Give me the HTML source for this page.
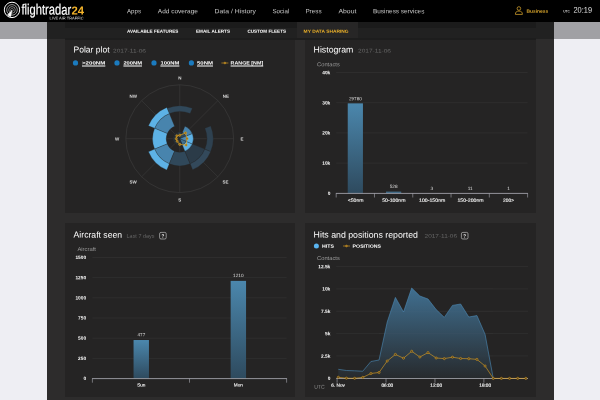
<!DOCTYPE html>
<html lang="en">
<head>
<meta charset="utf-8">
<title>Flightradar24 - My data sharing</title>
<style>
html,body{margin:0;padding:0}
body{width:600px;height:400px;overflow:hidden;background:#eeeef3;font-family:'Liberation Sans', sans-serif;text-rendering:geometricPrecision}
#page{position:relative;width:600px;height:400px;overflow:hidden}
.t{position:absolute;left:0;top:0;white-space:nowrap;line-height:normal;transform-origin:0 0}
.tl{position:absolute;left:0;top:0;width:600px;height:0;will-change:transform}
header{position:absolute;left:0;top:0;width:600px;height:21.7px;background:#000}
.band{position:absolute;left:0;top:21.7px;width:600px;height:17.5px;background:#a0a0a4}
.container{position:absolute;left:47px;top:21.7px;width:506.5px;height:378.3px;background:#2d2c2c}
.subnav{position:absolute;left:47px;top:21.7px;width:506.5px;height:17.5px;background:#212121}
.subshade{position:absolute;left:64.8px;top:21.7px;width:471.2px;height:6.6px;background:#1b1b1b}
.subshade2{position:absolute;left:64.8px;top:37.8px;width:471.2px;height:2.2px;background:#1d1d1d}
.tab{position:absolute;left:296.7px;top:21.7px;width:61px;height:17.6px;background:#272626}
.card{position:absolute;background:#252424}
svg{position:absolute;left:0;top:0;overflow:visible}
</style>
</head>
<body>
<div id="page">
<div class="band"></div>
<div class="container"></div>
<nav class="subnav"></nav>
<div class="subshade"></div>
<div class="tab"></div>
<div class="subshade2"></div>
<section class="card" style="left:65px;top:39.9px;width:230.3px;height:173.6px"></section>
<section class="card" style="left:305px;top:39.9px;width:231px;height:173.6px"></section>
<section class="card" style="left:65px;top:222.8px;width:230.3px;height:174.6px"></section>
<section class="card" style="left:305px;top:222.8px;width:231px;height:174.6px"></section>
<header></header>
<svg width="600" height="400" viewBox="0 0 600 400">
<defs>
<linearGradient id="bar" x1="0" y1="0" x2="0" y2="1"><stop offset="0" stop-color="#4b87ad"/><stop offset="1" stop-color="#2e4a5e"/></linearGradient>
<linearGradient id="area" gradientUnits="userSpaceOnUse" x1="0" y1="288" x2="0" y2="378.4"><stop offset="0" stop-color="#406f90"/><stop offset="1" stop-color="#272a2d"/></linearGradient>
</defs>
<g id="logo-icon" fill="none" stroke="#fff">
<circle cx="12" cy="9.9" r="7.7" stroke-width="1.0"/>
<circle cx="12" cy="9.9" r="5.3" stroke-width="0.7" stroke="#d8d8d8"/>
<circle cx="12" cy="9.9" r="3.3" stroke-width="0.65" stroke="#c4c4c4"/>
<circle cx="12" cy="9.9" r="1.5" stroke-width="0.55" stroke="#a8a8a8"/>
<path d="M12.1,9.9 L7.5,15 A6.9,6.9 0 0 0 10.7,16.7 Z" fill="#fff" stroke="#fff" stroke-width="0.4" stroke-linejoin="round"/>
</g>
<g id="user-icon" fill="none" stroke="#e0ab2f" stroke-width="0.72">
<circle cx="518.9" cy="8.5" r="1.8"/>
<path d="M515.4,14.4 C515.4,12 516.6,11.1 518.9,11.1 C521.2,11.1 522.4,12 522.4,14.4 Z" stroke-linejoin="round"/>
</g>
<g id="polar">
<circle cx="179.75" cy="138.7" r="53.9" fill="none" stroke="#484848" stroke-width="0.45"/>
<line x1="179.75" y1="138.7" x2="179.75" y2="84.80" stroke="#474747" stroke-width="0.4"/>
<line x1="179.75" y1="138.7" x2="217.86" y2="100.59" stroke="#474747" stroke-width="0.4"/>
<line x1="179.75" y1="138.7" x2="233.65" y2="138.70" stroke="#474747" stroke-width="0.4"/>
<line x1="179.75" y1="138.7" x2="217.86" y2="176.81" stroke="#474747" stroke-width="0.4"/>
<line x1="179.75" y1="138.7" x2="179.75" y2="192.60" stroke="#474747" stroke-width="0.4"/>
<line x1="179.75" y1="138.7" x2="141.64" y2="176.81" stroke="#474747" stroke-width="0.4"/>
<line x1="179.75" y1="138.7" x2="125.85" y2="138.70" stroke="#474747" stroke-width="0.4"/>
<line x1="179.75" y1="138.7" x2="141.64" y2="100.59" stroke="#474747" stroke-width="0.4"/>
<path d="M167.16,108.30A32.9,32.9 0 0 1 192.34,108.30L190.16,113.57A27.2,27.2 0 0 0 169.34,113.57Z" fill="#30485a" stroke="#252424" stroke-width="0.3"/>
<path d="M154.62,128.29A27.2,27.2 0 0 1 169.34,113.57L174.56,126.18A13.55,13.55 0 0 0 167.23,133.51Z" fill="#4884ad" stroke="#252424" stroke-width="0.3"/>
<path d="M148.43,125.73A33.9,33.9 0 0 1 166.78,107.38L169.34,113.57A27.2,27.2 0 0 0 154.62,128.29Z" fill="#5db2e6" stroke="#252424" stroke-width="0.3"/>
<path d="M154.62,149.11A27.2,27.2 0 0 1 154.62,128.29L167.23,133.51A13.55,13.55 0 0 0 167.23,143.89Z" fill="#5db2e6" stroke="#252424" stroke-width="0.3"/>
<path d="M169.34,163.83A27.2,27.2 0 0 1 154.62,149.11L167.23,143.89A13.55,13.55 0 0 0 174.56,151.22Z" fill="#4884ad" stroke="#252424" stroke-width="0.3"/>
<path d="M166.78,170.02A33.9,33.9 0 0 1 148.43,151.67L154.62,149.11A27.2,27.2 0 0 0 169.34,163.83Z" fill="#5db2e6" stroke="#252424" stroke-width="0.3"/>
<path d="M190.16,163.83A27.2,27.2 0 0 1 169.34,163.83L174.56,151.22A13.55,13.55 0 0 0 184.94,151.22Z" fill="#30485a" stroke="#252424" stroke-width="0.3"/>
<path d="M204.88,149.11A27.2,27.2 0 0 1 190.16,163.83L184.94,151.22A13.55,13.55 0 0 0 192.27,143.89Z" fill="#2b3b48" stroke="#252424" stroke-width="0.3"/>
<path d="M210.79,151.56A33.6,33.6 0 0 1 192.61,169.74L190.16,163.83A27.2,27.2 0 0 0 204.88,149.11Z" fill="#33495b" stroke="#252424" stroke-width="0.3"/>
<path d="M192.27,143.89A13.55,13.55 0 0 1 184.94,151.22L182.35,144.98A6.8,6.8 0 0 0 186.03,141.30Z" fill="#5db2e6" stroke="#252424" stroke-width="0.3"/>
<path d="M210.70,125.88A33.5,33.5 0 0 1 210.70,151.52L204.88,149.11A27.2,27.2 0 0 0 204.88,128.29Z" fill="#2e4150" stroke="#252424" stroke-width="0.3"/>
<path d="M192.27,133.51A13.55,13.55 0 0 1 192.27,143.89L186.03,141.30A6.8,6.8 0 0 0 186.03,136.10Z" fill="#5db2e6" stroke="#252424" stroke-width="0.3"/>
<path d="M184.94,126.18A13.55,13.55 0 0 1 192.27,133.51L186.03,136.10A6.8,6.8 0 0 0 182.35,132.42Z" fill="#4884ad" stroke="#252424" stroke-width="0.3"/>
<path d="M179.75,138.70L177.15,132.42A6.8,6.8 0 0 1 182.35,132.42Z" fill="#2a3a46" stroke="#252424" stroke-width="0.3"/>
<path d="M179.75,138.70L182.35,132.42A6.8,6.8 0 0 1 186.03,136.10Z" fill="#2f4a5e" stroke="#252424" stroke-width="0.3"/>
<path d="M179.75,138.70L186.03,136.10A6.8,6.8 0 0 1 186.03,141.30Z" fill="#4a88b5" stroke="#252424" stroke-width="0.3"/>
<path d="M179.75,138.70L186.03,141.30A6.8,6.8 0 0 1 182.35,144.98Z" fill="#3f7090" stroke="#252424" stroke-width="0.3"/>
<path d="M179.75,138.70L182.35,144.98A6.8,6.8 0 0 1 177.15,144.98Z" fill="#29353f" stroke="#252424" stroke-width="0.3"/>
<path d="M179.75,138.70L177.15,144.98A6.8,6.8 0 0 1 173.47,141.30Z" fill="#27313a" stroke="#252424" stroke-width="0.3"/>
<path d="M179.75,138.70L173.47,141.30A6.8,6.8 0 0 1 173.47,136.10Z" fill="#27313a" stroke="#252424" stroke-width="0.3"/>
<path d="M179.75,138.70L173.47,136.10A6.8,6.8 0 0 1 177.15,132.42Z" fill="#27313a" stroke="#252424" stroke-width="0.3"/>
<path d="M179.75,135.30L185.48,132.97L187.05,138.70L186.11,145.06L179.75,144.40L177.20,141.25L176.25,138.70L176.85,135.80Z" fill="none" stroke="#e3a321" stroke-width="0.7"/><circle cx="179.75" cy="135.30" r="1.1" fill="#8a6a20" stroke="#e3a321" stroke-width="0.55"/><circle cx="185.48" cy="132.97" r="1.1" fill="#8a6a20" stroke="#e3a321" stroke-width="0.55"/><circle cx="187.05" cy="138.70" r="1.1" fill="#8a6a20" stroke="#e3a321" stroke-width="0.55"/><circle cx="186.11" cy="145.06" r="1.1" fill="#8a6a20" stroke="#e3a321" stroke-width="0.55"/><circle cx="179.75" cy="144.40" r="1.1" fill="#8a6a20" stroke="#e3a321" stroke-width="0.55"/><circle cx="177.20" cy="141.25" r="1.1" fill="#8a6a20" stroke="#e3a321" stroke-width="0.55"/><circle cx="176.25" cy="138.70" r="1.1" fill="#8a6a20" stroke="#e3a321" stroke-width="0.55"/><circle cx="176.85" cy="135.80" r="1.1" fill="#8a6a20" stroke="#e3a321" stroke-width="0.55"/>
<circle cx="75.5" cy="62.9" r="2.6" fill="#1b7bbf"/><circle cx="117" cy="62.9" r="2.6" fill="#1b7bbf"/><circle cx="154" cy="62.9" r="2.6" fill="#1b7bbf"/><circle cx="191.4" cy="62.9" r="2.6" fill="#1b7bbf"/><line x1="221.4" y1="63" x2="228.4" y2="63" stroke="#e3a321" stroke-width="0.6"/><circle cx="224.9" cy="63" r="0.9" fill="#8a6a20" stroke="#e3a321" stroke-width="0.5"/>
</g>
<g id="histogram">
<line x1="336.2" y1="72.50" x2="527.6" y2="72.50" stroke="#3c3c3c" stroke-width="0.4"/>
<line x1="336.2" y1="102.70" x2="527.6" y2="102.70" stroke="#3c3c3c" stroke-width="0.4"/>
<line x1="336.2" y1="132.90" x2="527.6" y2="132.90" stroke="#3c3c3c" stroke-width="0.4"/>
<line x1="336.2" y1="163.10" x2="527.6" y2="163.10" stroke="#3c3c3c" stroke-width="0.4"/>
<rect x="347.74" y="103.36" width="15.2" height="89.94" fill="url(#bar)"/>
<rect x="386.02" y="191.71" width="15.2" height="1.59" fill="url(#bar)"/>
<line x1="335.9" y1="193.40" x2="527.9" y2="193.40" stroke="#a9a9b1" stroke-width="0.85"/>
<line x1="336.20" y1="193.3" x2="336.20" y2="197.5" stroke="#a9a9b1" stroke-width="0.6"/>
<line x1="374.48" y1="193.3" x2="374.48" y2="197.5" stroke="#a9a9b1" stroke-width="0.6"/>
<line x1="412.76" y1="193.3" x2="412.76" y2="197.5" stroke="#a9a9b1" stroke-width="0.6"/>
<line x1="451.04" y1="193.3" x2="451.04" y2="197.5" stroke="#a9a9b1" stroke-width="0.6"/>
<line x1="489.32" y1="193.3" x2="489.32" y2="197.5" stroke="#a9a9b1" stroke-width="0.6"/>
<line x1="527.60" y1="193.3" x2="527.60" y2="197.5" stroke="#a9a9b1" stroke-width="0.6"/>
</g>
<g id="aircraft">
<line x1="92.4" y1="257.50" x2="286.6" y2="257.50" stroke="#3c3c3c" stroke-width="0.4"/>
<line x1="92.4" y1="277.67" x2="286.6" y2="277.67" stroke="#3c3c3c" stroke-width="0.4"/>
<line x1="92.4" y1="297.84" x2="286.6" y2="297.84" stroke="#3c3c3c" stroke-width="0.4"/>
<line x1="92.4" y1="318.01" x2="286.6" y2="318.01" stroke="#3c3c3c" stroke-width="0.4"/>
<line x1="92.4" y1="338.18" x2="286.6" y2="338.18" stroke="#3c3c3c" stroke-width="0.4"/>
<line x1="92.4" y1="358.35" x2="286.6" y2="358.35" stroke="#3c3c3c" stroke-width="0.4"/>
<rect x="133.55" y="340.02" width="15.4" height="38.48" fill="url(#bar)"/>
<rect x="230.65" y="280.88" width="15.4" height="97.62" fill="url(#bar)"/>
<line x1="92.10000000000001" y1="378.60" x2="286.90000000000003" y2="378.60" stroke="#a9a9b1" stroke-width="0.85"/>
<line x1="92.40" y1="378.5" x2="92.40" y2="382.7" stroke="#a9a9b1" stroke-width="0.6"/>
<line x1="189.50" y1="378.5" x2="189.50" y2="382.7" stroke="#a9a9b1" stroke-width="0.6"/>
<line x1="286.60" y1="378.5" x2="286.60" y2="382.7" stroke="#a9a9b1" stroke-width="0.6"/>
<rect x="159.6" y="232.4" width="6.6" height="6.6" rx="1.4" fill="none" stroke="#e8e8e8" stroke-width="0.55"/>
</g>
<g id="hits">
<line x1="336.2" y1="266.55" x2="528" y2="266.55" stroke="#3c3c3c" stroke-width="0.4"/>
<line x1="336.2" y1="288.90" x2="528" y2="288.90" stroke="#3c3c3c" stroke-width="0.4"/>
<line x1="336.2" y1="311.25" x2="528" y2="311.25" stroke="#3c3c3c" stroke-width="0.4"/>
<line x1="336.2" y1="333.60" x2="528" y2="333.60" stroke="#3c3c3c" stroke-width="0.4"/>
<line x1="336.2" y1="355.95" x2="528" y2="355.95" stroke="#3c3c3c" stroke-width="0.4"/>
<path d="M338.30,378.4L338.30,369.30L346.45,370.50L354.61,370.80L362.76,371.25L370.92,361.50L379.07,360.00L387.23,322.00L395.38,297.40L403.54,312.00L411.69,288.00L419.85,296.00L428.00,299.00L436.16,309.60L444.31,317.40L452.47,305.40L460.62,304.00L468.78,317.00L476.94,315.60L485.09,334.40L493.25,378.40Z" fill="url(#area)"/>
<line x1="379.075" y1="288.90" x2="493.245" y2="288.90" stroke="rgba(255,255,255,0.05)" stroke-width="0.4"/>
<line x1="379.075" y1="311.25" x2="493.245" y2="311.25" stroke="rgba(255,255,255,0.05)" stroke-width="0.4"/>
<line x1="379.075" y1="333.60" x2="493.245" y2="333.60" stroke="rgba(255,255,255,0.05)" stroke-width="0.4"/>
<line x1="379.075" y1="355.95" x2="493.245" y2="355.95" stroke="rgba(255,255,255,0.05)" stroke-width="0.4"/>
<path d="M338.30,369.30L346.45,370.50L354.61,370.80L362.76,371.25L370.92,361.50L379.07,360.00L387.23,322.00L395.38,297.40L403.54,312.00L411.69,288.00L419.85,296.00L428.00,299.00L436.16,309.60L444.31,317.40L452.47,305.40L460.62,304.00L468.78,317.00L476.94,315.60L485.09,334.40L493.25,378.40" fill="none" stroke="#4b8bb8" stroke-width="0.6" stroke-linejoin="round"/>
<line x1="336.2" y1="378.50" x2="528" y2="378.50" stroke="#a9a9b1" stroke-width="0.8"/>
<line x1="337.10" y1="378.4" x2="337.10" y2="382.7" stroke="#a9a9b1" stroke-width="0.6"/>
<line x1="386.03" y1="378.4" x2="386.03" y2="382.7" stroke="#a9a9b1" stroke-width="0.6"/>
<line x1="434.96" y1="378.4" x2="434.96" y2="382.7" stroke="#a9a9b1" stroke-width="0.6"/>
<line x1="483.89" y1="378.4" x2="483.89" y2="382.7" stroke="#a9a9b1" stroke-width="0.6"/>
<path d="M338.30,377.30L346.45,378.20L354.61,378.30L362.76,377.40L370.92,373.50L379.07,372.45L387.23,361.00L395.38,354.45L403.54,358.20L411.69,351.30L419.85,357.00L428.00,352.60L436.16,358.00L444.31,358.60L452.47,357.20L460.62,358.50L468.78,358.70L476.94,359.40L485.09,366.00L493.25,378.40L501.40,378.40L509.56,378.40L517.71,378.40L525.87,378.40" fill="none" stroke="#e3a321" stroke-width="0.6" stroke-linejoin="round"/>
<circle cx="338.30" cy="377.30" r="1.1" fill="#54431f" stroke="#e3a321" stroke-width="0.5"/><circle cx="346.45" cy="378.20" r="1.1" fill="#54431f" stroke="#e3a321" stroke-width="0.5"/><circle cx="354.61" cy="378.30" r="1.1" fill="#54431f" stroke="#e3a321" stroke-width="0.5"/><circle cx="362.76" cy="377.40" r="1.1" fill="#54431f" stroke="#e3a321" stroke-width="0.5"/><circle cx="370.92" cy="373.50" r="1.1" fill="#54431f" stroke="#e3a321" stroke-width="0.5"/><circle cx="379.07" cy="372.45" r="1.1" fill="#54431f" stroke="#e3a321" stroke-width="0.5"/><circle cx="387.23" cy="361.00" r="1.1" fill="#54431f" stroke="#e3a321" stroke-width="0.5"/><circle cx="395.38" cy="354.45" r="1.1" fill="#54431f" stroke="#e3a321" stroke-width="0.5"/><circle cx="403.54" cy="358.20" r="1.1" fill="#54431f" stroke="#e3a321" stroke-width="0.5"/><circle cx="411.69" cy="351.30" r="1.1" fill="#54431f" stroke="#e3a321" stroke-width="0.5"/><circle cx="419.85" cy="357.00" r="1.1" fill="#54431f" stroke="#e3a321" stroke-width="0.5"/><circle cx="428.00" cy="352.60" r="1.1" fill="#54431f" stroke="#e3a321" stroke-width="0.5"/><circle cx="436.16" cy="358.00" r="1.1" fill="#54431f" stroke="#e3a321" stroke-width="0.5"/><circle cx="444.31" cy="358.60" r="1.1" fill="#54431f" stroke="#e3a321" stroke-width="0.5"/><circle cx="452.47" cy="357.20" r="1.1" fill="#54431f" stroke="#e3a321" stroke-width="0.5"/><circle cx="460.62" cy="358.50" r="1.1" fill="#54431f" stroke="#e3a321" stroke-width="0.5"/><circle cx="468.78" cy="358.70" r="1.1" fill="#54431f" stroke="#e3a321" stroke-width="0.5"/><circle cx="476.94" cy="359.40" r="1.1" fill="#54431f" stroke="#e3a321" stroke-width="0.5"/><circle cx="485.09" cy="366.00" r="1.1" fill="#54431f" stroke="#e3a321" stroke-width="0.5"/><circle cx="493.25" cy="378.40" r="1.1" fill="#54431f" stroke="#e3a321" stroke-width="0.5"/><circle cx="501.40" cy="378.40" r="1.1" fill="#54431f" stroke="#e3a321" stroke-width="0.5"/><circle cx="509.56" cy="378.40" r="1.1" fill="#54431f" stroke="#e3a321" stroke-width="0.5"/><circle cx="517.71" cy="378.40" r="1.1" fill="#54431f" stroke="#e3a321" stroke-width="0.5"/><circle cx="525.87" cy="378.40" r="1.1" fill="#54431f" stroke="#e3a321" stroke-width="0.5"/>
<circle cx="316.4" cy="246" r="2.5" fill="#5ab4f0"/><line x1="343" y1="246" x2="350" y2="246" stroke="#e3a321" stroke-width="0.6"/><circle cx="346.5" cy="246" r="0.9" fill="#8a6a20" stroke="#e3a321" stroke-width="0.5"/>
<rect x="461.4" y="232.4" width="6.6" height="6.6" rx="1.4" fill="none" stroke="#e8e8e8" stroke-width="0.55"/>
</g>
</svg>
<div class="tl logo"><span class="t" style="font-size:14.7px;color:#fff;transform:matrix(0.762,0.0017,0,1,21.40,2.55);-webkit-text-stroke:0.18px #fff;">flightradar</span>
<span class="t" style="font-size:11.6px;color:#f3b32a;font-weight:700;transform:matrix(0.976,0.0017,0,1,71.40,4.55);">24</span>
<span class="t" style="font-size:3.9px;color:#ddd;transform:matrix(1.023,0.0017,0,1,49.60,15.50);">LIVE AIR TRAFFIC</span></div>
<div class="tl mainnav"><span class="t" style="font-size:6.25px;color:#c8c8c8;transform:matrix(0.982,0.0017,0,1,127.00,8.30);">Apps</span>
<span class="t" style="font-size:6.25px;color:#c8c8c8;transform:matrix(1.042,0.0017,0,1,157.80,8.30);">Add coverage</span>
<span class="t" style="font-size:6.25px;color:#c8c8c8;transform:matrix(1.094,0.0017,0,1,214.60,8.30);">Data / History</span>
<span class="t" style="font-size:6.25px;color:#c8c8c8;transform:matrix(0.986,0.0017,0,1,272.40,8.30);">Social</span>
<span class="t" style="font-size:6.25px;color:#c8c8c8;transform:matrix(1.013,0.0017,0,1,305.40,8.30);">Press</span>
<span class="t" style="font-size:6.25px;color:#c8c8c8;transform:matrix(1.101,0.0017,0,1,338.40,8.30);">About</span>
<span class="t" style="font-size:6.25px;color:#c8c8c8;transform:matrix(1.027,0.0017,0,1,373.00,8.30);">Business services</span></div>
<div class="tl userbox"><span class="t" style="font-size:4.7px;color:#dca82d;font-weight:700;transform:matrix(1.046,0.0017,0,1,526.40,8.70);">Business</span>
<span class="t" style="font-size:3.5px;color:#c4c4c4;font-weight:700;transform:matrix(0.944,0.0017,0,1,563.20,9.50);">UTC</span>
<span class="t" style="font-size:8.3px;color:#e2e2e2;transform:matrix(0.891,0.0017,0,1,573.50,4.80);">20:19</span></div>
<div class="tl subnav-items"><span class="t" style="font-size:4.5px;color:#fff;font-weight:700;transform:matrix(1.023,0.0017,0,1,127.00,28.65);">AVAILABLE FEATURES</span>
<span class="t" style="font-size:4.5px;color:#fff;font-weight:700;transform:matrix(1.030,0.0017,0,1,196.00,28.65);">EMAIL ALERTS</span>
<span class="t" style="font-size:4.5px;color:#fff;font-weight:700;transform:matrix(1.018,0.0017,0,1,247.40,28.65);">CUSTOM FLEETS</span>
<span class="t" style="font-size:4.5px;color:#f0b429;font-weight:700;transform:matrix(1.082,0.0017,0,1,303.60,28.65);">MY DATA SHARING</span></div>
<div class="tl c1"><span class="t" style="font-size:8.7px;color:#fff;transform:matrix(0.981,0.0017,0,1,73.55,44.45);">Polar plot</span>
<span class="t" style="font-size:5.3px;color:#666;transform:matrix(1.236,0.0017,0,1,113.00,48.60);">2017-11-06</span>
<span class="t" style="font-size:4.7px;color:#fff;font-weight:700;transform:matrix(1.305,0.0017,0,1,82.00,60.55);text-decoration:underline;text-decoration-thickness:0.4px;text-underline-offset:0.55px;text-decoration-skip-ink:none;">&gt;200NM</span>
<span class="t" style="font-size:4.7px;color:#fff;font-weight:700;transform:matrix(1.230,0.0017,0,1,123.40,60.55);text-decoration:underline;text-decoration-thickness:0.4px;text-underline-offset:0.55px;text-decoration-skip-ink:none;">200NM</span>
<span class="t" style="font-size:4.7px;color:#fff;font-weight:700;transform:matrix(1.256,0.0017,0,1,160.40,60.55);text-decoration:underline;text-decoration-thickness:0.4px;text-underline-offset:0.55px;text-decoration-skip-ink:none;">100NM</span>
<span class="t" style="font-size:4.7px;color:#fff;font-weight:700;transform:matrix(1.278,0.0017,0,1,197.00,60.55);text-decoration:underline;text-decoration-thickness:0.4px;text-underline-offset:0.55px;text-decoration-skip-ink:none;">50NM</span>
<span class="t" style="font-size:4.7px;color:#fff;font-weight:700;transform:matrix(1.138,0.0017,0,1,230.60,60.55);text-decoration:underline;text-decoration-thickness:0.4px;text-underline-offset:0.55px;text-decoration-skip-ink:none;">RANGE [NM]</span>
<span class="t" style="font-size:4.5px;color:#dadada;font-weight:700;transform:matrix(1.000,0.0017,0,1,178.18,75.60);">N</span>
<span class="t" style="font-size:4.5px;color:#dadada;font-weight:700;transform:matrix(1.000,0.0017,0,1,222.87,93.80);">NE</span>
<span class="t" style="font-size:4.5px;color:#dadada;font-weight:700;transform:matrix(1.000,0.0017,0,1,240.49,136.60);">E</span>
<span class="t" style="font-size:4.5px;color:#dadada;font-weight:700;transform:matrix(1.000,0.0017,0,1,222.49,179.60);">SE</span>
<span class="t" style="font-size:4.5px;color:#dadada;font-weight:700;transform:matrix(1.000,0.0017,0,1,178.19,197.40);">S</span>
<span class="t" style="font-size:4.5px;color:#dadada;font-weight:700;transform:matrix(1.000,0.0017,0,1,129.38,179.60);">SW</span>
<span class="t" style="font-size:4.5px;color:#dadada;font-weight:700;transform:matrix(1.000,0.0017,0,1,115.08,136.60);">W</span>
<span class="t" style="font-size:4.5px;color:#dadada;font-weight:700;transform:matrix(1.000,0.0017,0,1,129.55,93.80);">NW</span></div>
<div class="tl c2"><span class="t" style="font-size:8.7px;color:#fff;transform:matrix(1.005,0.0017,0,1,313.60,44.50);">Histogram</span>
<span class="t" style="font-size:5.3px;color:#666;transform:matrix(1.236,0.0017,0,1,358.00,48.60);">2017-11-06</span>
<span class="t" style="font-size:5.6px;color:#999;transform:matrix(1.033,0.0017,0,1,317.00,62.20);">Contacts</span>
<span class="t" style="font-size:4.8px;color:#fff;font-weight:700;transform:matrix(1.000,0.0017,0,1,322.28,71.18);">40k</span>
<span class="t" style="font-size:4.8px;color:#fff;font-weight:700;transform:matrix(1.000,0.0017,0,1,322.28,101.38);">30k</span>
<span class="t" style="font-size:4.8px;color:#fff;font-weight:700;transform:matrix(1.000,0.0017,0,1,322.28,131.58);">20k</span>
<span class="t" style="font-size:4.8px;color:#fff;font-weight:700;transform:matrix(1.000,0.0017,0,1,322.28,161.78);">10k</span>
<span class="t" style="font-size:4.8px;color:#fff;font-weight:700;transform:matrix(1.000,0.0017,0,1,327.63,191.98);">0</span>
<span class="t" style="font-size:4.7px;color:#f4f4f4;transform:matrix(1.089,0.0017,0,1,347.75,197.75);-webkit-text-stroke:0.12px #f4f4f4;">&lt;50nm</span>
<span class="t" style="font-size:4.7px;color:#f4f4f4;transform:matrix(1.101,0.0017,0,1,382.25,197.75);-webkit-text-stroke:0.12px #f4f4f4;">50-100nm</span>
<span class="t" style="font-size:4.7px;color:#f4f4f4;transform:matrix(1.113,0.0017,0,1,419.00,197.75);-webkit-text-stroke:0.12px #f4f4f4;">100-150nm</span>
<span class="t" style="font-size:4.7px;color:#f4f4f4;transform:matrix(1.105,0.0017,0,1,457.40,197.75);-webkit-text-stroke:0.12px #f4f4f4;">150-200nm</span>
<span class="t" style="font-size:4.7px;color:#f4f4f4;transform:matrix(1.041,0.0017,0,1,503.00,197.75);-webkit-text-stroke:0.12px #f4f4f4;">200&gt;</span>
<span class="t" style="font-size:4.7px;color:#ddd;transform:matrix(1.000,0.0017,0,1,348.88,96.20);">29780</span>
<span class="t" style="font-size:4.7px;color:#ddd;transform:matrix(1.000,0.0017,0,1,389.69,184.00);">528</span>
<span class="t" style="font-size:4.7px;color:#ddd;transform:matrix(1.000,0.0017,0,1,430.60,185.90);">3</span>
<span class="t" style="font-size:4.7px;color:#ddd;transform:matrix(1.000,0.0017,0,1,467.76,185.90);">11</span>
<span class="t" style="font-size:4.7px;color:#ddd;transform:matrix(1.000,0.0017,0,1,507.20,185.90);">1</span></div>
<div class="tl c3"><span class="t" style="font-size:8.7px;color:#fff;transform:matrix(0.993,0.0017,0,1,73.60,229.60);">Aircraft seen</span>
<span class="t" style="font-size:5.3px;color:#666;transform:matrix(1.026,0.0017,0,1,126.60,233.70);">Last 7 days</span>
<span class="t" style="font-size:4.6px;color:#fff;font-weight:700;transform:matrix(1.000,0.0017,0,1,161.49,233.50);">?</span>
<span class="t" style="font-size:5.6px;color:#999;transform:matrix(1.050,0.0017,0,1,77.40,246.90);">Aircraft</span>
<span class="t" style="font-size:4.8px;color:#fff;font-weight:700;transform:matrix(1.000,0.0017,0,1,75.43,256.08);">1500</span>
<span class="t" style="font-size:4.8px;color:#fff;font-weight:700;transform:matrix(1.000,0.0017,0,1,75.43,276.25);">1250</span>
<span class="t" style="font-size:4.8px;color:#fff;font-weight:700;transform:matrix(1.000,0.0017,0,1,75.43,296.42);">1000</span>
<span class="t" style="font-size:4.8px;color:#fff;font-weight:700;transform:matrix(1.000,0.0017,0,1,78.08,316.59);">750</span>
<span class="t" style="font-size:4.8px;color:#fff;font-weight:700;transform:matrix(1.000,0.0017,0,1,78.08,336.76);">500</span>
<span class="t" style="font-size:4.8px;color:#fff;font-weight:700;transform:matrix(1.000,0.0017,0,1,78.08,356.93);">250</span>
<span class="t" style="font-size:4.8px;color:#fff;font-weight:700;transform:matrix(1.000,0.0017,0,1,83.43,377.10);">0</span>
<span class="t" style="font-size:4.7px;color:#f4f4f4;transform:matrix(1.000,0.0017,0,1,137.13,382.60);-webkit-text-stroke:0.12px #f4f4f4;">Sun</span>
<span class="t" style="font-size:4.7px;color:#f4f4f4;transform:matrix(1.000,0.0017,0,1,233.74,382.60);-webkit-text-stroke:0.12px #f4f4f4;">Mon</span>
<span class="t" style="font-size:4.7px;color:#ddd;transform:matrix(1.000,0.0017,0,1,137.49,332.20);">477</span>
<span class="t" style="font-size:4.7px;color:#ddd;transform:matrix(1.000,0.0017,0,1,233.08,273.03);">1210</span></div>
<div class="tl c4"><span class="t" style="font-size:8.7px;color:#fff;transform:matrix(1.010,0.0017,0,1,313.60,229.60);">Hits and positions reported</span>
<span class="t" style="font-size:5.3px;color:#666;transform:matrix(1.213,0.0017,0,1,424.60,233.70);">2017-11-06</span>
<span class="t" style="font-size:4.6px;color:#fff;font-weight:700;transform:matrix(1.000,0.0017,0,1,463.29,233.50);">?</span>
<span class="t" style="font-size:4.7px;color:#fff;font-weight:700;transform:matrix(1.123,0.0017,0,1,322.00,243.70);">HITS</span>
<span class="t" style="font-size:4.7px;color:#fff;font-weight:700;transform:matrix(1.112,0.0017,0,1,352.60,243.70);">POSITIONS</span>
<span class="t" style="font-size:5.6px;color:#999;transform:matrix(1.033,0.0017,0,1,317.00,255.90);">Contacts</span>
<span class="t" style="font-size:4.8px;color:#fff;font-weight:700;transform:matrix(1.000,0.0017,0,1,318.28,265.23);">12.5k</span>
<span class="t" style="font-size:4.8px;color:#fff;font-weight:700;transform:matrix(1.000,0.0017,0,1,322.28,287.58);">10k</span>
<span class="t" style="font-size:4.8px;color:#fff;font-weight:700;transform:matrix(1.000,0.0017,0,1,320.96,309.93);">7.5k</span>
<span class="t" style="font-size:4.8px;color:#fff;font-weight:700;transform:matrix(1.000,0.0017,0,1,324.96,332.28);">5k</span>
<span class="t" style="font-size:4.8px;color:#fff;font-weight:700;transform:matrix(1.000,0.0017,0,1,320.96,354.63);">2.5k</span>
<span class="t" style="font-size:4.8px;color:#fff;font-weight:700;transform:matrix(1.000,0.0017,0,1,327.63,376.98);">0</span>
<span class="t" style="font-size:5.6px;color:#888;transform:matrix(0.913,0.0017,0,1,314.30,384.80);">UTC</span>
<span class="t" style="font-size:4.7px;color:#f4f4f4;transform:matrix(1.000,0.0017,0,1,331.32,382.80);-webkit-text-stroke:0.15px #f4f4f4;">6. Nov</span>
<span class="t" style="font-size:4.7px;color:#f4f4f4;transform:matrix(1.000,0.0017,0,1,381.43,382.80);-webkit-text-stroke:0.15px #f4f4f4;">06:00</span>
<span class="t" style="font-size:4.7px;color:#f4f4f4;transform:matrix(1.000,0.0017,0,1,430.33,382.80);-webkit-text-stroke:0.15px #f4f4f4;">12:00</span>
<span class="t" style="font-size:4.7px;color:#f4f4f4;transform:matrix(1.000,0.0017,0,1,479.33,382.80);-webkit-text-stroke:0.15px #f4f4f4;">18:00</span></div>
</div>
</body>
</html>
